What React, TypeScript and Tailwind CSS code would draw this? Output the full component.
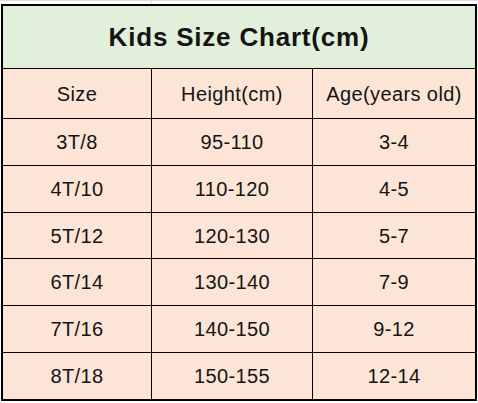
import React from "react";

const rows = [
  ["3T/8", "95-110", "3-4"],
  ["4T/10", "110-120", "4-5"],
  ["5T/12", "120-130", "5-7"],
  ["6T/14", "130-140", "7-9"],
  ["7T/16", "140-150", "9-12"],
  ["8T/18", "150-155", "12-14"],
];

function Row({ cells, last, header }: { cells: string[]; last?: boolean; header?: boolean }) {
  return (
    <div
      className={
        "grid grid-cols-[149px_161px_1fr] " +
        (header ? "h-[50px] " : "flex-1 ") +
        (last ? "" : "border-b border-black")
      }
    >
      <div className="flex items-center justify-center border-r border-black">{cells[0]}</div>
      <div className="flex items-center justify-center border-r border-black">{cells[1]}</div>
      <div className="flex items-center justify-center">{cells[2]}</div>
    </div>
  );
}

export default function App() {
  return (
    <div
      className="w-[478px] h-[403px] bg-white flex flex-col text-[#141414]"
      style={{ fontFamily: '"Liberation Sans", Arial, sans-serif' }}
    >
      <div className="h-[4px] border-t border-[#dcdcdc] flex">
        <div className="w-[152px] border-r border-[#e2e2e2]" />
      </div>
      <div className="ml-[1px] w-[476px] h-[397px] border-2 border-black flex flex-col bg-[#fce4d6] text-[20px] tracking-[0.4px]">
        <div className="h-[63px] bg-[#e2efda] border-b border-black flex items-center justify-center text-[26px] font-bold tracking-[0.8px] pt-[1px]">
          Kids Size Chart(cm)
        </div>
        <Row cells={["Size", "Height(cm)", "Age(years old)"]} header />
        {rows.map((r, i) => (
          <Row key={i} cells={r} last={i === rows.length - 1} />
        ))}
      </div>
    </div>
  );
}
